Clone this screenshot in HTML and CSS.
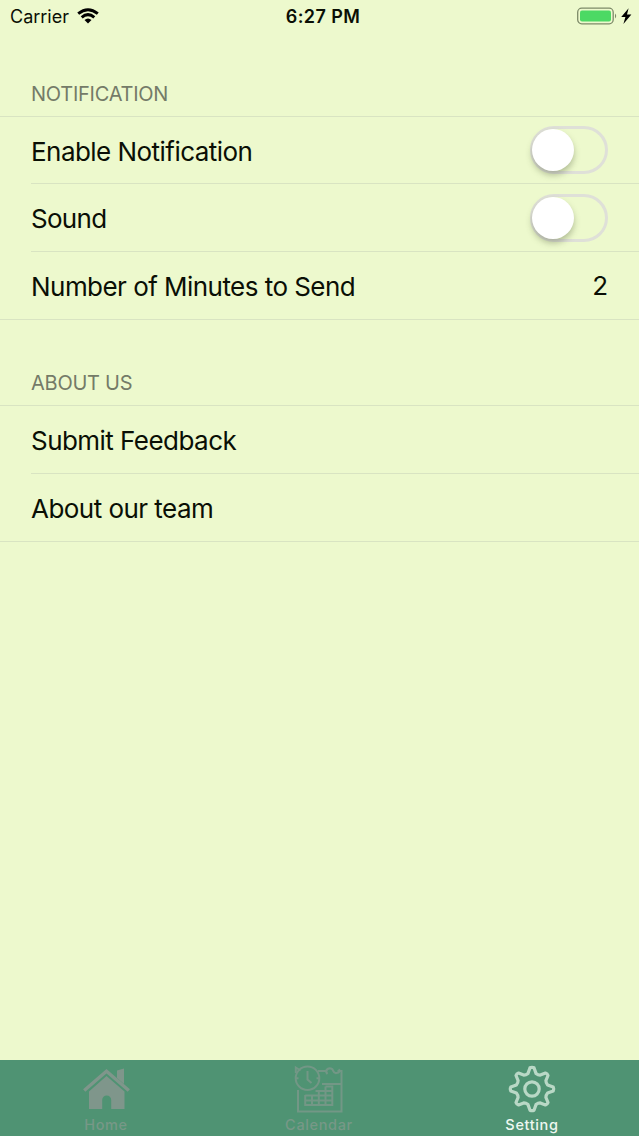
FILE: index.html
```html
<!DOCTYPE html>
<html lang="en">
<head>
<meta charset="utf-8">
<title>Setting</title>
<link rel="stylesheet" href="styles.css">
</head>
<body>
<div class="screen">
  <header class="status">
    <div class="carrier"><span class="carrier-name">Carrier</span>
      <svg class="wifi" width="22" height="16" viewBox="0 0 22 16"><g fill="none" stroke="#000" stroke-width="3"><path d="M1.2 5.6Q11-2.2 20.8 5.6"/><path d="M4.7 9.3Q11 4 17.3 9.3"/></g><path d="M7.5 12Q11 8.8 14.5 12L11 15.5Z"/></svg>
    </div>
    <div class="time">6:27 PM</div>
    <div class="power">
      <svg width="56" height="20" viewBox="0 0 56 20"><rect x="1.7" y="2.2" width="35.5" height="15.6" rx="4" fill="none" stroke="#7d8a68" stroke-width="1.3"/><rect x="4" y="4.5" width="31" height="11" rx="2" fill="#4cd964"/><path d="M39 7.5Q41.4 10 39 12.5Z" fill="#7d8a68"/><path d="M52.6 2.3L45.2 11h4.2l-2 7L55.4 8.600h-4.400Z"/></svg>
    </div>
  </header>
  <main class="settings">
    <h2 class="heading first">NOTIFICATION</h2>
    <ul class="list alerts">
      <li class="row"><span class="label enable">Enable Notification</span><span class="switch"><span class="knob"></span></span></li>
      <li class="row"><span class="label sound">Sound</span><span class="switch"><span class="knob"></span></span></li>
      <li class="row"><span class="label minutes">Number of Minutes to Send</span><span class="value">2</span></li>
    </ul>
    <h2 class="heading about">ABOUT US</h2>
    <ul class="list">
      <li class="row"><span class="label feedback">Submit Feedback</span></li>
      <li class="row"><span class="label team">About our team</span></li>
    </ul>
  </main>
  <nav class="tabs">
    <a class="tab home">
      <svg width="50" height="50" viewBox="0 0 50 50" fill="#7f968b"><path d="M3.2 26.5L25.5 7.2 47.8 26.5" fill="none" stroke="#7f968b" stroke-width="3.4"/><path d="M36 6.5L43 4.5V20L36 14Z"/><path d="M8 27.5L25.5 12 43.5 27.5V45H30.2V36a4.4 4.4 0 0 0-9 0V45H8Z"/></svg>
      <span>Home</span>
    </a>
    <a class="tab calendar">
      <svg width="50" height="50" viewBox="1 0 50 50" fill="none" stroke="#739786" stroke-width="2"><circle cx="14.5" cy="14.2" r="11.8"/><path d="M14.5 7v8.5l4 3.5M2.5 14.2h3M23.5 14.2h3M7.5 6.5L2.8 3.5v5.5M5 26v21.500h43.500V7h-4M25 7h8M29 20h19.500M12.200 31v10H39.300V22.500H32.500M12.200 36.500h27M12.200 31.500h27M12.200 41h27M19 31v10M25.800 26v15M32.500 22.500V41M22.500 27h17"/><path d="M34.500 10c-3-3 0-6.500 3.500-5.500 3.500 1 1 5 5.500 4.500 3 0 4-2.500 2-3.500" stroke-width="2.200"/></svg>
      <span>Calendar</span>
    </a>
    <a class="tab setting">
      <svg width="50" height="50" viewBox="-25 -25 50 50" fill="none" stroke="#b9d8c6" stroke-width="3.2" stroke-linejoin="round"><circle r="7.2"/><path d="M-2-21.2Q0-22.200 2-21.200L4-15.600Q6.200-13.800 8.300-13.900L13.500-16Q15.400-15.400 16-13.500L13.900-8.300Q13.800-6.200 15.600-4L21.200-2Q22.200 0 21.200 2L15.600 4Q13.800 6.200 13.900 8.300L16 13.500Q15.400 15.400 13.500 16L8.300 13.900Q6.200 13.800 4 15.600L2 21.200Q0 22.200-2 21.200L-4 15.600Q-6.200 13.800-8.300 13.900L-13.500 16Q-15.400 15.400-16 13.500L-13.900 8.300Q-13.800 6.200-15.600 4L-21.200 2Q-22.200 0-21.200-2L-15.600-4Q-13.800-6.200-13.900-8.300L-16-13.500Q-15.400-15.400-13.500-16L-8.300-13.900Q-6.200-13.800-4-15.600Z"/></svg>
      <span>Setting</span>
    </a>
  </nav>
</div>
</body>
</html>
```

FILE: styles.css
```css
* { box-sizing: border-box; }
body { margin: 0; background: #edf9cd; color: #0a0f05; font-family: Inter, "Liberation Sans", sans-serif; }
.screen { height: 1136px; display: flex; flex-direction: column; }
.status { height: 34px; padding: 0 7px 2px 10px; display: grid; grid-template-columns: 1fr auto 1fr; align-items: center; }
.carrier { display: flex; align-items: center; gap: 8px; font-size: 18px; }
.wifi { display: block; }
.time { padding-left: 4px; font-size: 18px; font-weight: 600; letter-spacing: .4px; }
.power { justify-self: end; height: 20px; }
.settings { flex: 1; }
.heading { margin: 0; padding: 0 31px 9px; display: flex; align-items: flex-end; font-size: 20px; line-height: 26px; font-weight: 400; letter-spacing: -.25px; color: #747b68; border-bottom: 1px solid #d9e4c2; }
.first { height: 83px; }
.about { height: 86px; }
.list { list-style: none; margin: 0; padding: 0 0 0 31px; }
.row { height: 68px; padding-right: 31px; display: flex; align-items: center; justify-content: space-between; border-bottom: 1px solid #d9e4c2; }
.alerts .row:first-child { height: 67px; }
.row:last-child { margin-left: -31px; padding-left: 31px; }
.label, .value { font-size: 26px; line-height: 34px; white-space: nowrap; }
.label { padding-top: 2px; letter-spacing: -.54px; }
.alerts .label { padding-top: 3px; }
.sound { letter-spacing: -.7px; }
.value { margin-top: 1px; }
.switch { width: 78px; height: 48px; margin-top: 1px; border: 3px solid #dfe0d8; border-radius: 24px; }
.alerts .row:first-child .switch { margin-top: -1px; }
.knob { display: block; width: 42px; height: 42px; margin-left: -1px; border-radius: 50%; background: #fff; box-shadow: 0 4px 6px rgba(70, 80, 50, .35); }
.tabs { height: 76px; background: #4f9373; display: grid; grid-template-columns: repeat(3, 1fr); }
.tab { display: flex; flex-direction: column; align-items: center; padding: 4px 2px 0 0; font-size: 14.5px; line-height: 20px; font-weight: 500; letter-spacing: .65px; color: #779887; }
.tab svg { display: block; }
.tab span { margin: 1px -1px 0 0; }
.setting { color: #eef8f0; }
```
